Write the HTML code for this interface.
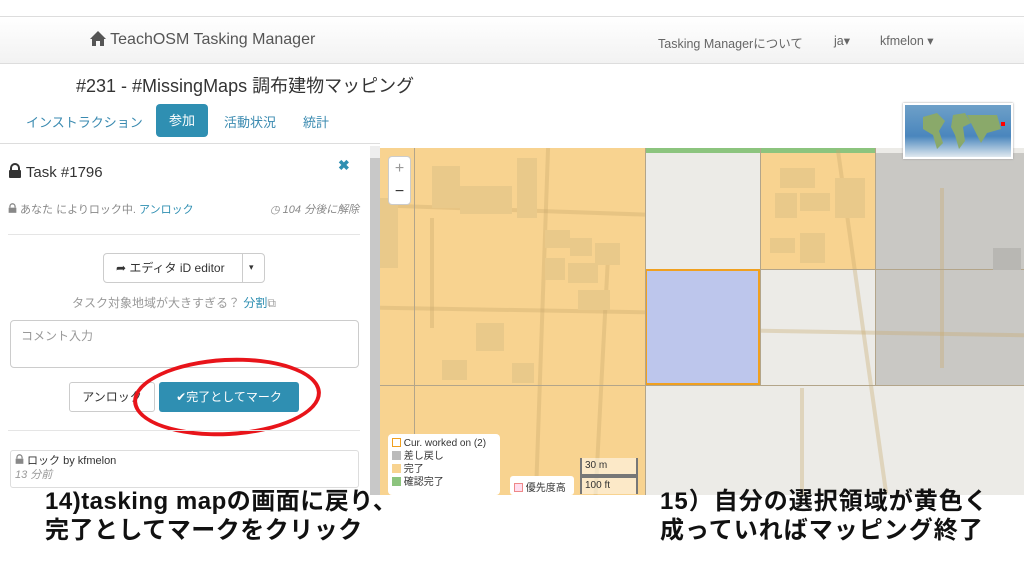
<!DOCTYPE html>
<html><head><meta charset="utf-8"><style>
*{margin:0;padding:0;box-sizing:border-box}
body{width:1024px;height:576px;overflow:hidden;background:#fff;font-family:"Liberation Sans","Noto Sans CJK JP",sans-serif;position:relative;color:#333}
.a{position:absolute}
.nav{left:0;top:16px;width:1024px;height:48px;background:linear-gradient(#fff,#f2f2f2);border-top:1px solid #ddd;border-bottom:1px solid #ddd}
.blk{background:#e9c98a}
.rd{position:absolute;background:rgba(200,170,110,.35)}
</style></head><body>
<div class="a nav"></div>
<div class="a" style="left:90px;top:31px;font-size:16px;color:#555"><svg width="16" height="15" viewBox="0 0 16 15" style="vertical-align:-2px"><path d="M8 0L0 8h2v7h4v-5h4v5h4V8h2z" fill="#555"/></svg> TeachOSM Tasking Manager</div>
<div class="a" style="left:658px;top:33px;font-size:12.5px;color:#666">Tasking Managerについて</div>
<div class="a" style="left:834px;top:33px;font-size:12.5px;color:#666">ja▾</div>
<div class="a" style="left:880px;top:33px;font-size:12.5px;color:#666">kfmelon ▾</div>
<div class="a" style="left:76px;top:72px;font-size:18px;color:#333">#231 - #MissingMaps 調布建物マッピング</div>
<div class="a" style="left:26px;top:112px;font-size:13px;color:#3a8ab0">インストラクション</div>
<div class="a" style="left:156px;top:104px;width:52px;height:33px;background:#2f8fb2;border-radius:4px;color:#fff;font-size:13px;text-align:center;line-height:33px">参加</div>
<div class="a" style="left:224px;top:112px;font-size:13px;color:#3a8ab0">活動状況</div>
<div class="a" style="left:303px;top:112px;font-size:13px;color:#3a8ab0">統計</div>

<!-- map -->
<div class="a" style="left:380px;top:148px;width:644px;height:347px;background:#ecebe7;overflow:hidden">
<div class="a" style="left:0;top:0;width:265px;height:347px;background:#f8d390"></div>
<div class="a" style="left:265px;top:0;width:230px;height:5px;background:#8cc47e"></div>
<div class="a" style="left:380px;top:5px;width:115px;height:116px;background:#f8d390"></div>
<div class="a" style="left:495px;top:5px;width:149px;height:232px;background:#c9c8c4"></div>
<div class="rd" style="left:0;top:60px;width:265px;height:4px;transform:rotate(2deg)"></div>
<div class="rd" style="left:0;top:160px;width:265px;height:4px;transform:rotate(1deg)"></div>
<div class="rd" style="left:50px;top:70px;width:4px;height:110px"></div>
<div class="rd" style="left:160px;top:0;width:4px;height:347px;transform:rotate(2deg)"></div>
<div class="rd" style="left:220px;top:100px;width:4px;height:247px;transform:rotate(3deg)"></div>
<div class="rd" style="left:265px;top:182px;width:379px;height:4px;transform:rotate(1deg)"></div>
<div class="rd" style="left:480px;top:0;width:4px;height:347px;transform:rotate(-8deg)"></div>
<div class="rd" style="left:560px;top:40px;width:4px;height:180px"></div>
<div class="rd" style="left:420px;top:240px;width:4px;height:107px"></div>
<div class="a" style="left:265px;top:121px;width:115px;height:116px;background:#bdc6ec;border:2px solid #f0a020"></div>
<div class="a" style="left:34px;top:0;width:1px;height:347px;background:#b3a58a"></div>
<div class="a" style="left:265px;top:0;width:1px;height:347px;background:#b3a58a"></div>
<div class="a" style="left:380px;top:0;width:1px;height:237px;background:#b3a58a"></div>
<div class="a" style="left:495px;top:0;width:1px;height:237px;background:#b3a58a"></div>
<div class="a" style="left:0;top:237px;width:644px;height:1px;background:#b3a58a"></div>
<div class="a" style="left:380px;top:121px;width:264px;height:1px;background:#b3a58a"></div>
<div class="a blk" style="left:52px;top:18px;width:28px;height:42px"></div>
<div class="a blk" style="left:80px;top:38px;width:52px;height:28px"></div>
<div class="a blk" style="left:137px;top:10px;width:20px;height:60px"></div>
<div class="a blk" style="left:165px;top:82px;width:25px;height:18px"></div>
<div class="a blk" style="left:190px;top:90px;width:22px;height:18px"></div>
<div class="a blk" style="left:215px;top:95px;width:25px;height:22px"></div>
<div class="a blk" style="left:165px;top:110px;width:20px;height:22px"></div>
<div class="a blk" style="left:188px;top:115px;width:30px;height:20px"></div>
<div class="a blk" style="left:198px;top:142px;width:32px;height:20px"></div>
<div class="a blk" style="left:96px;top:175px;width:28px;height:28px"></div>
<div class="a blk" style="left:62px;top:212px;width:25px;height:20px"></div>
<div class="a blk" style="left:132px;top:215px;width:22px;height:20px"></div>
<div class="a blk" style="left:0;top:50px;width:18px;height:70px"></div>
<div class="a blk" style="left:400px;top:20px;width:35px;height:20px"></div>
<div class="a blk" style="left:395px;top:45px;width:22px;height:25px"></div>
<div class="a blk" style="left:420px;top:45px;width:30px;height:18px"></div>
<div class="a blk" style="left:455px;top:30px;width:30px;height:40px"></div>
<div class="a blk" style="left:390px;top:90px;width:25px;height:15px"></div>
<div class="a blk" style="left:420px;top:85px;width:25px;height:30px"></div>
<div class="a" style="left:613px;top:100px;width:28px;height:22px;background:#b8b7b3"></div>
<div class="a" style="left:8px;top:8px;width:23px;height:49px;background:#fff;border-radius:4px;border:1px solid #ccc;font-size:16px;text-align:center;line-height:23px;color:#999">+<br><span style="color:#333">−</span></div>
<div class="a" style="left:8px;top:286px;width:112px;height:61px;background:#fff;border-radius:4px;font-size:10px;line-height:13px;padding:3px 4px;color:#333">
<div><span style="display:inline-block;width:9px;height:9px;border:1px solid #f0a020;vertical-align:-1px"></span> Cur. worked on (2)</div>
<div><span style="display:inline-block;width:9px;height:9px;background:#bbb;vertical-align:-1px"></span> 差し戻し</div>
<div><span style="display:inline-block;width:9px;height:9px;background:#f8d390;vertical-align:-1px"></span> 完了</div>
<div><span style="display:inline-block;width:9px;height:9px;background:#8cc47e;vertical-align:-1px"></span> 確認完了</div></div>
<div class="a" style="left:130px;top:328px;width:64px;height:19px;background:#fff;border-radius:3px;font-size:10px;padding:3px 4px"><span style="display:inline-block;width:9px;height:9px;border:1px solid #e88;background:#fde;vertical-align:-1px"></span> 優先度高</div>
<div class="a" style="left:200px;top:310px;width:58px;height:37px;font-size:10px;line-height:16px">
<div style="border:2px solid #777;border-top:none;background:rgba(255,255,255,.5);padding-left:3px">30 m</div><div style="border:2px solid #777;border-bottom:none;background:rgba(255,255,255,.5);padding-left:3px">100 ft</div></div>
</div>
<div class="a" style="left:903px;top:103px;width:110px;height:56px;background:linear-gradient(#6ea0c8,#4a86bd 60%,#dfe8ef);border:2px solid #fff;box-shadow:0 0 2px #999"><svg width="106" height="52"><path d="M18 12l14-4 8 8-6 10 4 12-6 6-4-14-10-6zM48 10l12-2 6 10-8 4 2 14-6 8-4-14-4-8zM62 10l30 0 4 14-14 4-6 10-10-20z" fill="#8aa96a"/><rect x="96" y="17" width="4" height="4" fill="red"/></svg></div>

<!-- panel -->
<div class="a" style="left:0;top:143px;width:380px;height:352px;background:#fff;border-top:1px solid #ddd"></div>
<div class="a" style="left:370px;top:146px;width:10px;height:349px;background:#c8c8c8"></div>
<div class="a" style="left:370px;top:146px;width:10px;height:12px;background:#eee"></div>
<div class="a" style="left:8px;top:163px;font-size:15px;color:#333"><svg width="14" height="15" viewBox="0 0 14 15" style="vertical-align:-1px"><path d="M3 7V5a4 4 0 018 0v2" stroke="#333" stroke-width="2" fill="none"/><rect x="1" y="7" width="12" height="8" rx="1" fill="#333"/></svg> Task #1796</div>
<div class="a" style="left:338px;top:157px;font-size:14px;color:#2f8fb2;font-weight:bold">✖</div>
<div class="a" style="left:8px;top:201px;font-size:11px;color:#888"><svg width="9" height="10" viewBox="0 0 14 15"><path d="M3 7V5a4 4 0 018 0v2" stroke="#888" stroke-width="2" fill="none"/><rect x="1" y="7" width="12" height="8" fill="#888"/></svg> あなた によりロック中. <span style="color:#2f8fb2">アンロック</span></div>
<div class="a" style="left:270px;top:201px;font-size:11px;color:#888;font-style:italic">◷ 104 分後に解除</div>
<div class="a" style="left:8px;top:234px;width:352px;height:1px;background:#e5e5e5"></div>
<div class="a" style="left:103px;top:253px;width:162px;height:30px;border:1px solid #ccc;border-radius:4px;font-size:12px;line-height:28px;padding-left:12px;color:#333">➦ エディタ iD editor</div>
<div class="a" style="left:242px;top:253px;width:1px;height:30px;background:#ccc"></div>
<div class="a" style="left:249px;top:262px;font-size:9px">▾</div>
<div class="a" style="left:72px;top:294px;font-size:12px;color:#999">タスク対象地域が大きすぎる？ <span style="color:#2f8fb2">分割</span>⧉</div>
<div class="a" style="left:10px;top:320px;width:349px;height:48px;border:1px solid #ccc;border-radius:4px;font-size:12px;color:#999;padding:6px 10px">コメント入力</div>
<div class="a" style="left:69px;top:382px;width:86px;height:30px;border:1px solid #ccc;border-radius:3px;font-size:12px;line-height:28px;text-align:center">アンロック</div>
<div class="a" style="left:159px;top:382px;width:140px;height:30px;background:#2f8fb2;border-radius:3px;color:#fff;font-size:12px;line-height:30px;text-align:center">✔完了としてマーク</div>
<div class="a" style="left:133px;top:358px;width:188px;height:78px;border:4px solid #e8141a;border-radius:50%;transform:rotate(-3deg)"></div>
<div class="a" style="left:8px;top:430px;width:352px;height:1px;background:#e5e5e5"></div>
<div class="a" style="left:10px;top:450px;width:349px;height:38px;border:1px solid #ddd;border-radius:3px;font-size:11px;padding:3px 4px;color:#333;line-height:14px"><svg width="9" height="10" viewBox="0 0 14 15"><path d="M3 7V5a4 4 0 018 0v2" stroke="#888" stroke-width="2" fill="none"/><rect x="1" y="7" width="12" height="8" fill="#888"/></svg> ロック by kfmelon<br><i style="color:#999">13 分前</i></div>

<div class="a" style="left:0;top:495px;width:1024px;height:81px;background:#fff"></div>
<div class="a" style="left:45px;top:487px;font-size:24px;font-weight:bold;line-height:29px;color:#111;letter-spacing:0.5px">14)tasking mapの画面に戻り、<br>完了としてマークをクリック</div>
<div class="a" style="left:660px;top:487px;font-size:24px;font-weight:bold;line-height:29px;color:#111;letter-spacing:1px">15）自分の選択領域が黄色く<br>成っていればマッピング終了</div>
</body></html>
